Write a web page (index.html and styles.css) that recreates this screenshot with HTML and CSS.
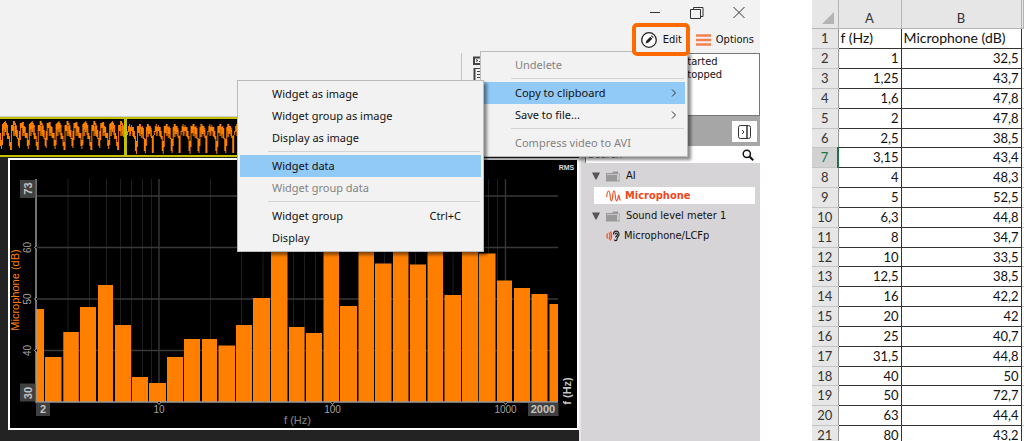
FILE: index.html
```html
<!DOCTYPE html>
<html lang="en">
<head>
<meta charset="utf-8">
<title>Copy widget data to clipboard</title>
<link rel="stylesheet" href="styles.css">
</head>
<body>
<div class="page">
<main class="app">
  <header class="topbar">
    <div class="window-buttons">
      <button type="button" aria-label="Minimise"><svg width="14" height="14" viewBox="0 0 14 14"><path d="M2 6.500h10"/></svg></button>
      <button type="button" aria-label="Restore"><svg width="14" height="14" viewBox="0 0 14 14"><path d="M.5 3.500h10v9h-10zM3.500 3.500v-2h9.500v9h-2.500"/></svg></button>
      <button type="button" aria-label="Close"><svg width="14" height="14" viewBox="0 0 14 14"><path d="M1.500 1l11 11M12.500 1L1.500 12"/></svg></button>
    </div>
    <div class="toolbar">
      <button type="button" class="tool tool-edit">
        <svg width="18" height="18" viewBox="0 0 18 18"><circle cx="9" cy="9" r="7.300" fill="#fff" stroke="#222" stroke-width="1.300"/><path d="M5.500 12.500l1-3 3.800-3.800 2 2-3.800 3.800zM10.900 5.100l.8-.8 2 2-.8.8z" fill="#222"/></svg>
        Edit</button>
      <button type="button" class="tool">
        <svg width="15" height="12" viewBox="0 0 15 12"><path d="M0 1.500h15M0 6h15M0 10.500h15" stroke="#f4804f" stroke-width="2.400"/></svg>
        Options</button>
    </div>
  </header>

  <section class="status">
    <div class="status-icons">
      <svg width="12" height="28" viewBox="0 0 12 28" fill="none" stroke="#444"><path d="M1 2.500h11M1 9h11M2 2v7.500M2.500 13v12.500" stroke-width="2"/><path d="M4 4.500l2 1-2 1M7 6.500h5M2 13.500h10M2 25.500h10M5 16.500h6M5 19.500h6M5 22.500h6"/></svg>
    </div>
    <div class="log"><p>Started</p><p>Stopped</p></div>
  </section>

  <section class="workspace">
    <div class="display">
      <div class="overview">
        <svg class="wave wave-before" height="36">
          <defs>
            <pattern id="wave-a" width="26.800" height="36" patternUnits="userSpaceOnUse">
              <path class="wave-dim" d="M4 8v9M6.500 7v9M13.500 7v10M16 6v11M22.500 6v11M24.500 9v8"/>
              <path d="M0 14L1.500 30L2.500 18L3 6L4.500 4L5.500 13L6 5L7.500 8L8 20L9 17L10 26L10.800 31L11.500 15L12 6L13 12L14 3L15 5L15.800 15L16.500 7L17 18L18.500 21L19.300 29L20 13L21 4L22 9L22.800 3L23.500 14L24.500 7L25.500 19L26.800 14"/>
            </pattern>
            <pattern id="wave-b" width="26.800" height="36" patternUnits="userSpaceOnUse">
              <path class="wave-dim" d="M3 8v9M5.500 8v9M12.500 7v10M15 8v11M21 7v11M23.500 9v8"/>
              <path d="M0 16L1.500 11L2.500 5L3.500 15L4.500 6L5.500 13L6.500 8L7.300 20L8.500 17L9.300 35L10.300 20L11 7L12 14L13 5L14 9L15 15L15.500 7L16.500 19L17.500 21L18.200 34L19.200 18L20 8L21 5L22 15L23 7L24 13L25 19L26 34L26.800 16"/>
            </pattern>
          </defs>
          <rect width="100%" height="36" fill="url(#wave-a)"/>
        </svg>
        <svg class="wave wave-after" height="36"><rect width="100%" height="36" fill="url(#wave-b)"/></svg>
      </div>
      <figure class="chart">
        <svg viewBox="10 160 567 268" role="img" aria-label="Microphone level by frequency">
          <g stroke="#1f1f1f" stroke-width="1">
            <path d="M68 179V402M89.500 179V402M106.500 179V402M120.500 179V402M131.500 179V402M142.500 179V402M151.500 179V402M210.500 179V402M241.500 179V402M263 179V402M279.500 179V402M293.500 179V402M304.500 179V402M315.500 179V402M324.500 179V402M384.500 179V402M415.500 179V402M436 179V402M453 179V402M467 179V402M478.500 179V402M488.500 179V402M497.500 179V402"/>
            <path d="M159 179V402M332.500 179V402M505.500 179V402" stroke="#333" stroke-width="1.500"/>
            <path d="M36 196H558M36 247.500H558M36 299H558M36 350.500H558" stroke="#383838" stroke-width="1.300"/>
          </g>
          <g fill="#ff8000" stroke="none">
            <rect x="36" y="309" width="8" height="93"/><rect x="45" y="357" width="16.500" height="45"/>
            <rect x="63.300" y="332" width="15.500" height="70"/><rect x="80" y="307" width="16" height="95"/>
            <rect x="98" y="285" width="15" height="117"/><rect x="115" y="325" width="16" height="77"/>
            <rect x="132" y="377" width="16" height="25"/><rect x="149" y="383" width="17" height="19"/>
            <rect x="167" y="357" width="16" height="45"/><rect x="184" y="339" width="16" height="63"/>
            <rect x="202" y="339" width="15" height="63"/><rect x="218.500" y="345.500" width="16.500" height="56.500"/>
            <rect x="236" y="325" width="16" height="77"/><rect x="253" y="298" width="17" height="104"/>
            <rect x="271" y="182" width="16.500" height="220"/><rect x="289" y="327" width="15.500" height="75"/>
            <rect x="306" y="333" width="16" height="69"/><rect x="323.500" y="234" width="15.500" height="168"/>
            <rect x="340" y="306" width="17" height="96"/><rect x="358.500" y="222" width="15.500" height="180"/>
            <rect x="375" y="263.500" width="16.500" height="138.500"/><rect x="393" y="240" width="15.500" height="162"/>
            <rect x="410" y="264.500" width="16" height="137.500"/><rect x="427.500" y="230" width="15.500" height="172"/>
            <rect x="444.500" y="295" width="16.500" height="107"/><rect x="462" y="226" width="16" height="176"/>
            <rect x="479" y="253.500" width="16.500" height="148.500"/><rect x="497" y="280.500" width="15" height="121.500"/>
            <rect x="514" y="288" width="16" height="114"/><rect x="531.500" y="294" width="16" height="108"/>
            <rect x="549.500" y="304" width="8.500" height="98"/>
          </g>
          <path d="M36 179V402H558" fill="none" stroke="#999" stroke-width="1.500"/>
          <g fill="#000" stroke="#aaa"><path d="M37 245.500l-2.500 2 2.500 2M37 297l-2.500 2 2.500 2M37 348.500l-2.500 2 2.500 2M157 402l2 2.500 2-2.500M330.500 402l2 2.500 2-2.500M503.500 402l2 2.500 2-2.500"/></g>
          <g fill="#404040"><rect x="20" y="180" width="15.500" height="18"/><rect x="20" y="383.500" width="15.500" height="18"/><rect x="36" y="403" width="14" height="13"/><rect x="528" y="403" width="30.500" height="13"/></g>
          <g class="axis">
            <text x="159" y="412.500">10</text><text x="332.500" y="412.500">100</text><text x="505.500" y="412.500">1000</text>
            <text transform="translate(31 247.500) rotate(-90)">60</text>
            <text transform="translate(31 299) rotate(-90)">50</text>
            <text transform="translate(31 350.500) rotate(-90)">40</text>
          </g>
          <g class="axis-end">
            <text transform="translate(32 188.500) rotate(-90)">73</text>
            <text transform="translate(32 393) rotate(-90)">30</text>
            <text x="43" y="413">2</text><text x="543" y="413">2000</text>
            <text transform="translate(571 391) rotate(-90)">f (Hz)</text>
          </g>
          <text class="axis-name" x="297.500" y="424">f (Hz)</text>
          <text class="axis-name axis-name-y" transform="translate(19 290) rotate(-90)">Microphone (dB)</text>
          <text class="mode" x="566.500" y="170">RMS</text>
        </svg>
      </figure>
    </div>

    <aside class="channels">
      <div class="channels-head">
        <button type="button" aria-label="Collapse panel"><svg width="16" height="16" viewBox="0 0 16 16" fill="none" stroke="#333"><rect x="1.500" y="1.500" width="12" height="13" rx="2"/><path d="M10 1.500v13" stroke-width="1.500"/><path d="M5 6l2 2-2 2"/></svg></button>
      </div>
      <label class="search"><input type="text" placeholder="Search" aria-label="Search channels">
        <svg width="12" height="12" viewBox="0 0 12 12" fill="none" stroke="#111"><circle cx="4.800" cy="4.800" r="3.600" stroke-width="1.500"/><path d="M7.500 7.500l3.700 3.700" stroke-width="2"/></svg></label>
      <ul class="tree">
        <li class="group"><svg width="8" height="8" viewBox="0 0 8 8"><path d="M0 .5h8L4.500 7.500h-1z" fill="#555"/></svg><svg width="14" height="11" viewBox="0 0 14 11"><path d="M0 2h6l1.500-1.500H12V2h1.500v8.500H0z" fill="#999"/><path d="M1 3.500h10.500V10M12.500 1v8" fill="none" stroke="#c8c8c8"/></svg>AI</li>
        <li class="channel selected"><svg width="15" height="12" viewBox="0 0 15 12" fill="none" stroke="#f0532d" stroke-width="1.200"><path d="M.7 7C1 2.500 1.600 1 2.600 1c2.200 0 1 9.800 2.800 9.800S6.200 1 8 1s.8 9.800 2.600 9.800S11.800 5 12.600 5s.4 4.500 1.900 5.500"/></svg>Microphone</li>
        <li class="group"><svg width="8" height="8" viewBox="0 0 8 8"><path d="M0 .5h8L4.500 7.500h-1z" fill="#555"/></svg><svg width="14" height="11" viewBox="0 0 14 11"><path d="M0 2h6l1.500-1.500H12V2h1.500v8.500H0z" fill="#999"/><path d="M1 3.500h10.500V10M12.500 1v8" fill="none" stroke="#c8c8c8"/></svg>Sound level meter 1</li>
        <li class="channel"><svg width="14" height="12" viewBox="0 0 14 12" fill="none"><path d="M1.500 3.500q-1 2.500 0 5M3 2.500q1.800 3.500 0 7M4.500 1.500q2.200 4.500 0 9" stroke="#f0532d" stroke-width="1.300"/><path d="M7.500 4.500C7.500 0 13 .2 13 4.200c0 2.800-2 2.500-2 4.800 0 2.200-2.500 2.200-2.500.5M9.200 4.500c0-2 2.200-2 2.200 0 0 1.500-1.500 1.500-1.800 3" stroke="#222" stroke-width="1.200"/></svg>Microphone/LCFp</li>
      </ul>
    </aside>
  </section>

  <div class="menu menu-edit" role="menu">
    <button type="button" role="menuitem" disabled>Undelete</button>
    <hr>
    <button type="button" role="menuitem" class="active">Copy to clipboard<svg width="6" height="8" viewBox="0 0 6 8"><path d="M1 .5L4.500 4 1 7.500"/></svg></button>
    <button type="button" role="menuitem">Save to file...<svg width="6" height="8" viewBox="0 0 6 8"><path d="M1 .5L4.500 4 1 7.500"/></svg></button>
    <hr>
    <button type="button" role="menuitem" disabled>Compress video to AVI</button>
  </div>
  <div class="menu menu-copy" role="menu">
    <button type="button" role="menuitem">Widget as image</button>
    <button type="button" role="menuitem">Widget group as image</button>
    <button type="button" role="menuitem">Display as image</button>
    <hr>
    <button type="button" role="menuitem" class="active">Widget data</button>
    <button type="button" role="menuitem" disabled>Widget group data</button>
    <hr>
    <button type="button" role="menuitem">Widget group<kbd>Ctrl+C</kbd></button>
    <button type="button" role="menuitem">Display</button>
  </div>
</main>

<section class="sheet">
  <table>
    <colgroup><col class="col-num"><col class="col-a"><col class="col-b"><col></colgroup>
    <thead><tr><th><svg width="12" height="12" viewBox="0 0 12 12"><path d="M12 0v12H0z" fill="#b4b4b4"/></svg></th><th scope="col">A</th><th scope="col">B</th><th></th></tr></thead>
    <tbody>
      <tr class="titles"><th scope="row">1</th><td>f (Hz)</td><td>Microphone (dB)</td><td></td></tr>
      <tr><th scope="row">2</th><td>1</td><td>32,5</td><td></td></tr>
      <tr><th scope="row">3</th><td>1,25</td><td>43,7</td><td></td></tr>
      <tr><th scope="row">4</th><td>1,6</td><td>47,8</td><td></td></tr>
      <tr><th scope="row">5</th><td>2</td><td>47,8</td><td></td></tr>
      <tr><th scope="row">6</th><td>2,5</td><td>38,5</td><td></td></tr>
      <tr class="current"><th scope="row">7</th><td>3,15</td><td>43,4</td><td></td></tr>
      <tr><th scope="row">8</th><td>4</td><td>48,3</td><td></td></tr>
      <tr><th scope="row">9</th><td>5</td><td>52,5</td><td></td></tr>
      <tr><th scope="row">10</th><td>6,3</td><td>44,8</td><td></td></tr>
      <tr><th scope="row">11</th><td>8</td><td>34,7</td><td></td></tr>
      <tr><th scope="row">12</th><td>10</td><td>33,5</td><td></td></tr>
      <tr><th scope="row">13</th><td>12,5</td><td>38,5</td><td></td></tr>
      <tr><th scope="row">14</th><td>16</td><td>42,2</td><td></td></tr>
      <tr><th scope="row">15</th><td>20</td><td>42</td><td></td></tr>
      <tr><th scope="row">16</th><td>25</td><td>40,7</td><td></td></tr>
      <tr><th scope="row">17</th><td>31,5</td><td>44,8</td><td></td></tr>
      <tr><th scope="row">18</th><td>40</td><td>50</td><td></td></tr>
      <tr><th scope="row">19</th><td>50</td><td>72,7</td><td></td></tr>
      <tr><th scope="row">20</th><td>63</td><td>44,4</td><td></td></tr>
      <tr><th scope="row">21</th><td>80</td><td>43,2</td><td></td></tr>
    </tbody>
  </table>
</section>
</div>
</body>
</html>
```
FILE: styles.css
```css
* { box-sizing: border-box; }
body { margin: 0; background: #fff; color: #111; font: 11px/16px "Noto Sans", "Open Sans", sans-serif; }
button { border: 0; padding: 0; background: none; color: inherit; font: inherit; }
svg { display: block; flex: none; }
ul, p, figure { margin: 0; padding: 0; list-style: none; }

.page { display: grid; grid-template-columns: minmax(0, 1fr) 212px; gap: 52px; height: 100vh; overflow: hidden; }
.app { position: relative; display: flex; flex-direction: column; background: #f2f2f2; font-family: "DejaVu Sans Condensed", "DejaVu Sans", sans-serif; }

/* Title bar and tools */
.window-buttons { display: flex; justify-content: flex-end; align-items: center; gap: 28px; height: 26px; padding-right: 14px; }
.window-buttons path { fill: none; stroke: #333; stroke-width: 1; }
.toolbar { display: flex; justify-content: flex-end; align-items: center; gap: 6px; height: 26px; padding: 1px 6px 0 0; }
.tool { display: flex; align-items: center; gap: 5px; }
.tool-edit { position: relative; z-index: 4; height: 33px; padding: 0 4px; border: 4px solid #ff6a00; border-radius: 5px; background: #f2f2f2; }

/* Event log */
.status { display: flex; justify-content: flex-end; height: 64px; padding-top: 1px; }
.status-icons { width: 26px; padding: 2px 0 0 10px; border-left: 1px solid #c4c4c4; }
.log { width: 273px; height: 63px; padding: 1px 0 0 193px; border: 1px solid #777; background: #fff; line-height: 13px; }

/* Display and channel list */
.workspace { flex: 1; display: grid; grid-template-columns: minmax(0, 1fr) 181px; min-height: 0; }
.display { background: #232323; border-top: 1px solid #ccc; }
.overview { display: flex; margin-bottom: 1px; border: 2px solid #c2c000; border-left: 0; background: #000; }
.wave { min-width: 0; }
.wave path { fill: none; stroke: #ff8000; stroke-width: 1.4; shape-rendering: crispEdges; }
.wave .wave-dim { stroke: #b85c00; stroke-width: 2; }
.wave-before { width: 22%; border-right: 3px solid #c2c000; }
.wave-after { flex: 1; }
.chart { margin-left: 8px; border: 2px solid #fff; background: #000; }
.chart svg { width: 100%; height: auto; }
.chart text { font-family: "Liberation Sans", Arial, sans-serif; font-size: 10px; text-anchor: middle; fill: #a0a0a0; }
.chart .axis-end text { font-size: 11px; font-weight: bold; fill: #c4c4c4; }
.chart .axis-name { font-size: 11px; fill: #888; }
.chart .axis-name-y { fill: #ff8000; }
.chart .mode { font-size: 7px; font-weight: bold; fill: #ddd; }

.channels { background: #d6d4d6; border-left: 2px solid #e8e8e8; }
.channels-head { display: flex; justify-content: flex-end; align-items: center; height: 30px; padding: 1px 3px 0; background: #a6a6a6; }
.channels-head button { display: grid; place-items: center; width: 25px; height: 21px; background: #fff; }
.search { display: flex; align-items: center; height: 17px; margin-left: 4px; padding-right: 6px; background: #fff; border-left: 1px solid #777; }
.search input { flex: 1; min-width: 0; height: 16px; border: 0; padding: 0 2px; background: none; font: inherit; }
.tree { padding: 3px 5px 0 11px; }
.tree li { display: flex; align-items: center; height: 20px; }
.tree .group { gap: 6px; }
.tree .channel { gap: 4px; padding-left: 14px; }
.tree .selected { height: 17px; margin: 1px 0 2px 2px; padding-left: 12px; background: #fff; color: #f0471c; font-weight: bold; }

/* Menus */
.menu { position: absolute; padding: 2px; border: 1px solid #bbb; background: #f2f2f2; box-shadow: 3px 3px 3px rgba(0, 0, 0, .45); font-family: "Noto Sans", "Open Sans", sans-serif; }
.menu-edit { z-index: 2; top: 51px; right: 72px; width: 208px; }
.menu-copy { z-index: 3; top: 80px; right: 276px; width: 247px; }
.menu button { display: flex; align-items: center; justify-content: space-between; width: 100%; height: 22px; padding: 0 8px 0 32px; text-align: left; }
.menu button:disabled { color: #838383; }
.menu .active { background: #91c9f7; }
.menu svg path { fill: none; stroke: #333; stroke-width: 1; }
.menu kbd { padding-right: 12px; font: inherit; }
.menu hr { height: 1px; margin: 2px 1px 3px 28px; border: 0; background: #d4d4d4; }

/* Spreadsheet */
.sheet { height: 100vh; overflow: hidden; }
table { width: 100%; table-layout: fixed; border-collapse: collapse; font: 13px/12px Lato, "Open Sans", sans-serif; }
.col-num { width: 26px; }
.col-a { width: 63px; }
.col-b { width: 120px; }
th { padding: 0; border: 1px solid #b4b4b4; border-left: 0; background: #e6e6e6; color: #333; font-weight: normal; }
thead th { height: 28px; padding-top: 8px; border-top: 0; }
thead svg { margin-left: 10px; }
tbody th { height: 20px; border-color: #c4c4c4; border-right-color: #999; }
tbody tr:nth-child(6n) th { height: 19px; }
td { padding: 0 2px; border: 1px solid #333; text-align: right; }
td:nth-child(2) { border-left-color: #999; }
td:last-child { border-right: 0; border-color: #c4c4c4; border-left-color: #333; }
.titles td { font-size: 14px; text-align: left; }
.current th { border-right: 2px solid #217346; background: #d2d2d2; color: #217346; }
```
